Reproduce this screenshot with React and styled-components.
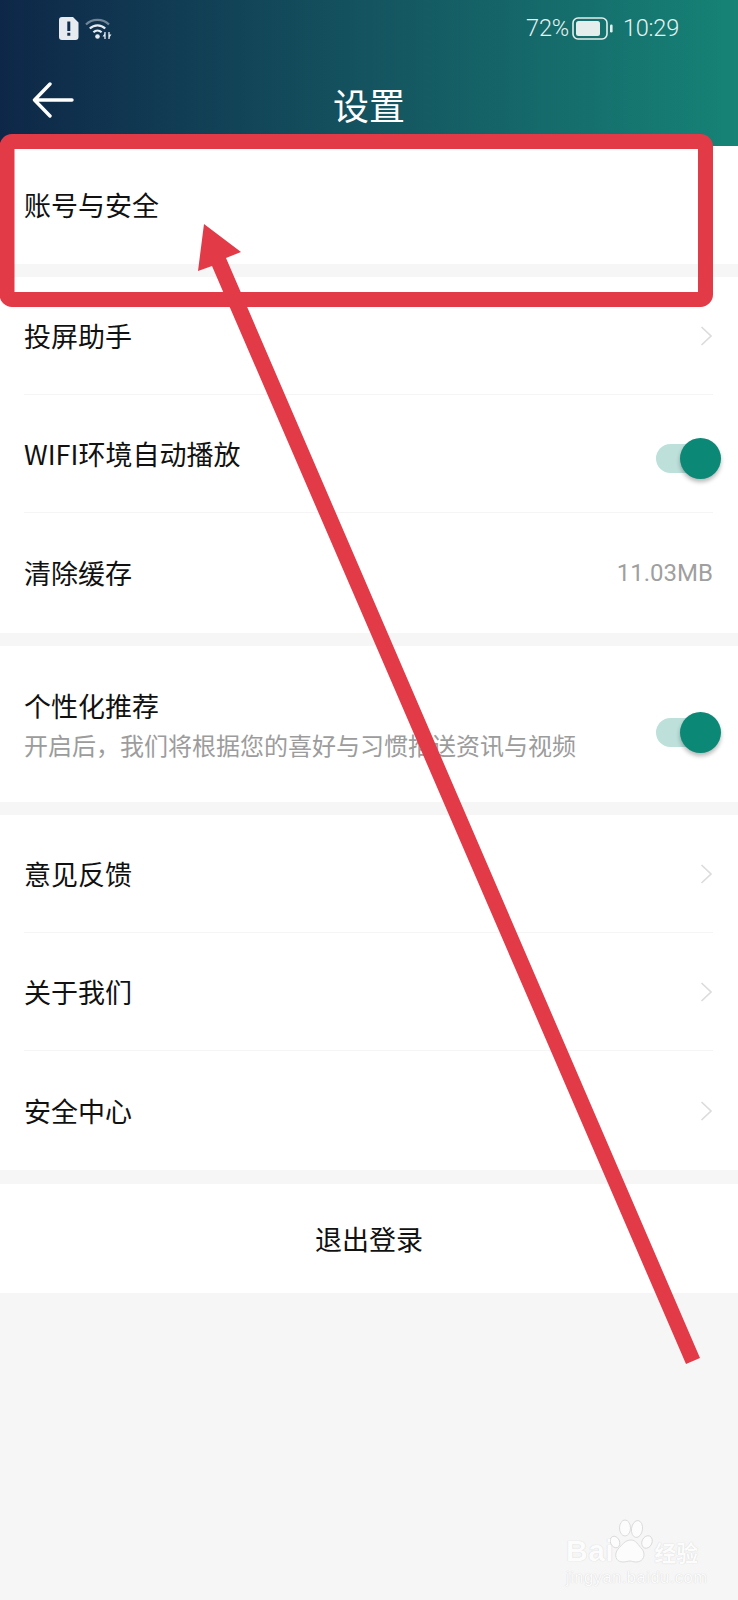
import React from "react";
import styled, { createGlobalStyle } from "styled-components";

const Global = createGlobalStyle`
  html, body { margin: 0; padding: 0; background: #f6f6f6; }
  * { box-sizing: border-box; }
`;

const CJK = `"Noto Sans CJK SC", "Noto Sans", sans-serif`;

const Page = styled.div`
  position: relative;
  width: 738px;
  height: 1600px;
  overflow: hidden;
  background: #f6f6f6;
  font-family: ${CJK};
`;

const Header = styled.header`
  height: 146px;
  background: linear-gradient(90deg, #0e2748 0%, #14525f 48%, #168376 100%);
  color: #fff;
`;

const StatusBar = styled.div`
  height: 58px;
  padding: 17px 59px 0 59px;
  display: flex;
  align-items: flex-start;
  justify-content: space-between;
`;

const StatusGroup = styled.div`
  display: flex;
  align-items: center;
  gap: ${(p) => p.$gap || 6}px;
  height: 22px;
`;

const StatusText = styled.span`
  font-family: Roboto, sans-serif;
  font-size: 23.5px;
  font-weight: 300;
  line-height: 22px;
  color: #e8f2f0;
  letter-spacing: -0.2px;
`;

const NavBar = styled.div`
  position: relative;
  height: 88px;
  display: flex;
  align-items: center;
  justify-content: center;
`;

const BackButton = styled.div`
  position: absolute;
  left: 32px;
  top: 24px;
  width: 42px;
  height: 36px;
`;

const Title = styled.h1`
  margin: 3px 0 0;
  font-size: 36px;
  font-weight: 400;
  line-height: 50px;
`;

const Section = styled.section`
  background: #fff;
  margin-bottom: ${(p) => p.$gap ?? 13}px;
`;

const Row = styled.div`
  height: ${(p) => p.$h || 118}px;
  margin: 0 25px 0 24px;
  display: flex;
  align-items: center;
  justify-content: space-between;
  border-bottom: ${(p) => (p.$line ? "1px solid #f5f5f5" : "none")};
`;

const Label = styled.div`
  font-size: 27px;
  line-height: 38px;
  color: #111;
`;

const Sub = styled.div`
  font-size: 24px;
  line-height: 34px;
  color: #9c9c9c;
  margin-top: 3px;
`;

const Value = styled.span`
  font-family: Roboto, sans-serif;
  font-size: 24px;
  color: #9f9f9f;
`;

const Toggle = styled.div`
  position: relative;
  width: 58px;
  height: 29px;
  margin-top: ${(p) => p.$drop}px;
  margin-right: -1px;
  border-radius: 15px;
  background: #bde0db;
`;

const Knob = styled.div`
  position: absolute;
  right: -7px;
  top: -6px;
  width: 41px;
  height: 41px;
  border-radius: 50%;
  background: #0b8876;
  box-shadow: 0 3px 4px rgba(0, 0, 0, 0.28);
`;

const Centered = styled.div`
  height: 109px;
  background: #fff;
  display: flex;
  align-items: center;
  justify-content: center;
  font-size: 27px;
  color: #111;
`;

const Annotation = styled.svg`
  position: absolute;
  left: 0;
  top: 0;
  width: 738px;
  height: 1600px;
  pointer-events: none;
`;

const Watermark = styled.div`
  position: absolute;
  left: 566px;
  top: 1518px;
  width: 136px;
  height: 68px;
  color: #fcfcfc;
  text-shadow: 0 0 1px #c9c9c9;
`;

const WmRow = styled.div`
  display: flex;
  align-items: flex-end;
  height: 46px;
  line-height: 28px;
`;

const WmBai = styled.span`
  font-family: "Liberation Sans", sans-serif;
  font-size: 30px;
  font-weight: 700;
  line-height: 26px;
  letter-spacing: 0.5px;
`;

const WmCn = styled.span`
  margin-left: 40px;
  font-size: 22px;
  line-height: 26px;
  font-weight: 700;
`;

const WmUrl = styled.div`
  font-family: "Liberation Sans", sans-serif;
  font-size: 16.5px;
  line-height: 20px;
  margin-top: 3px;
  letter-spacing: 0.5px;
  white-space: nowrap;
`;

const WmPaw = styled.svg`
  position: absolute;
  left: 44px;
  top: 0;
  width: 44px;
  height: 46px;
`;

const Chevron = () => (
  <svg width="13" height="20" viewBox="0 0 13 20" fill="none">
    <path d="M1.5 1l9.5 9-9.5 9" stroke="#dcdcdc" strokeWidth="1.7" />
  </svg>
);

const Alert = () => (
  <svg width="20" height="23" viewBox="0 0 20 23">
    <path
      fillRule="evenodd"
      fill="#e7ebf0"
      d="M3 0h11l5.5 5.5V20a3 3 0 0 1-3 3H3a3 3 0 0 1-3-3V3a3 3 0 0 1 3-3zM8.3 4.5v9.5h3V4.5zM8.3 15.8v3h3v-3z"
    />
  </svg>
);

const Wifi = () => (
  <svg width="27" height="23" viewBox="0 0 27 23" fill="none" stroke="#e7ebf0">
    <path d="M1 7.5C7 1.2 18 1.2 24 7.5" strokeWidth="2.2" opacity="0.45" />
    <path d="M4.8 11.5c4.4-4.3 11-4.3 15.4 0" strokeWidth="2.2" />
    <path d="M8.4 15.3c2.4-2.2 5.8-2.2 8.2 0" strokeWidth="2.2" />
    <circle cx="12.5" cy="19.5" r="2.3" fill="#e7ebf0" stroke="none" />
    <path d="M20 15v7M24 15v7" strokeWidth="1.3" />
    <path d="M20 16l-2.5 3.5H20zM24 21l2.5-3.5H24z" fill="#e7ebf0" stroke="none" />
  </svg>
);

const Battery = () => (
  <svg width="41" height="23" viewBox="0 0 41 23" fill="none">
    <rect x="1" y="1" width="34" height="21" rx="5" stroke="#e4eeec" strokeWidth="1.6" />
    <rect x="4" y="4" width="24" height="15" rx="2.5" fill="#e4eeec" />
    <rect x="38" y="7.5" width="2.6" height="8" rx="1.2" fill="#e4eeec" />
  </svg>
);

const BackArrow = () => (
  <svg width="42" height="36" viewBox="0 0 42 36" fill="none" stroke="#fff" strokeWidth="3.4" strokeLinecap="round" strokeLinejoin="round">
    <path d="M40 18H3M18 2L2.5 18 18 34" />
  </svg>
);

const SwitchOn = ({ drop }) => (
  <Toggle $drop={drop}>
    <Knob />
  </Toggle>
);

export default function App() {
  return (
    <Page>
      <Global />
      <Header>
        <StatusBar>
          <StatusGroup $gap={6}>
            <Alert />
            <Wifi />
          </StatusGroup>
          <StatusGroup $gap={3}>
            <StatusText>72%</StatusText>
            <Battery />
            <StatusText style={{ marginLeft: 7 }}>10:29</StatusText>
          </StatusGroup>
        </StatusBar>
        <NavBar>
          <BackButton>
            <BackArrow />
          </BackButton>
          <Title>设置</Title>
        </NavBar>
      </Header>

      <Section>
        <Row $h={118}>
          <Label>账号与安全</Label>
        </Row>
      </Section>

      <Section>
        <Row $line>
          <Label>投屏助手</Label>
          <Chevron />
        </Row>
        <Row $line>
          <Label>WIFI环境自动播放</Label>
          <SwitchOn drop={10} />
        </Row>
        <Row $h={120}>
          <Label>清除缓存</Label>
          <Value>11.03MB</Value>
        </Row>
      </Section>

      <Section>
        <Row $h={156}>
          <div>
            <Label>个性化推荐</Label>
            <Sub>开启后，我们将根据您的喜好与习惯推送资讯与视频</Sub>
          </div>
          <SwitchOn drop={16} />
        </Row>
      </Section>

      <Section $gap={14}>
        <Row $line>
          <Label>意见反馈</Label>
          <Chevron />
        </Row>
        <Row $line>
          <Label>关于我们</Label>
          <Chevron />
        </Row>
        <Row $h={119}>
          <Label>安全中心</Label>
          <Chevron />
        </Row>
      </Section>

      <Centered>退出登录</Centered>

      <Watermark>
        <WmPaw viewBox="0 0 44 46">
          <g fill="#fcfcfc" stroke="#d4d4d4" strokeWidth="0.8">
            <ellipse cx="5" cy="24" rx="4.5" ry="6" transform="rotate(-25 5 24)" />
            <ellipse cx="15" cy="10" rx="5.5" ry="8" />
            <ellipse cx="27" cy="11" rx="5.5" ry="8.5" transform="rotate(8 27 11)" />
            <ellipse cx="37" cy="24" rx="5" ry="6.5" transform="rotate(25 37 24)" />
            <path d="M21 22c5 0 7 5 11 9 4 5 2 13-6 13-3 0-4-1-6-1s-4 1-7 1C5 44 4 36 8 31c4-4 7-9 13-9z" />
          </g>
        </WmPaw>
        <WmRow>
          <WmBai>Bai</WmBai>
          <WmCn>经验</WmCn>
        </WmRow>
        <WmUrl>jingyan.baidu.com</WmUrl>
      </Watermark>

      <Annotation viewBox="0 0 738 1600">
        <rect x="7" y="141.5" width="698.5" height="158" rx="5" fill="none" stroke="#e33a48" strokeWidth="15" />
        <path
          fill="#e33a48"
          d="M204 224 L241 252 L226 258 L700 1358 L686 1364 L212 266 L198 271 Z"
        />
      </Annotation>
    </Page>
  );
}
